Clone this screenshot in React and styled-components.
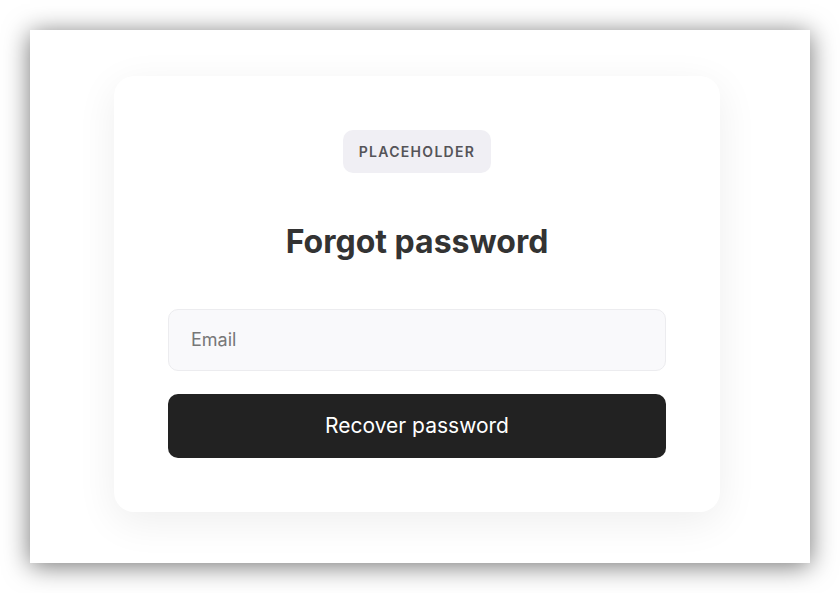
import styled, { createGlobalStyle } from "styled-components";

const GlobalStyle = createGlobalStyle`
    html, body {
        margin: 0;
        padding: 0;
        background: #FFF;
        font-family: Inter, "Noto Sans", sans-serif;
    }
`;

const App = () => {
    return (
        <>
            <GlobalStyle />
            <Page>
                <Frame>
                    <Card>
                        <Badge>PLACEHOLDER</Badge>
                        <Title>Forgot password</Title>
                        <Form onSubmit={(e) => e.preventDefault()}>
                            <Input type="email" placeholder="Email" />
                            <Button type="submit">Recover password</Button>
                        </Form>
                    </Card>
                </Frame>
            </Page>
        </>
    );
};

export default App;

const Page = styled.div`
    width: 840px;
    height: 593px;
    padding: 30px;
    box-sizing: border-box;
`;

const Frame = styled.div`
    width: 780px;
    height: 533px;
    background: #FFF;
    box-shadow: 0 3px 24px rgba(0, 0, 0, 0.55);
    display: flex;
    align-items: center;
    justify-content: center;
`;

const Card = styled.div`
    width: 606px;
    box-sizing: border-box;
    margin-right: 6px;
    margin-bottom: 6px;
    padding: 54px;
    background: #FFF;
    border-radius: 20px;
    box-shadow: 0 10px 40px rgba(0, 0, 0, 0.07);
    display: flex;
    flex-direction: column;
    align-items: center;
`;

const Badge = styled.div`
    height: 43px;
    padding: 0 16px;
    box-sizing: border-box;
    display: flex;
    align-items: center;
    background: #F0EFF4;
    border-radius: 10px;
    font-size: 14px;
    font-weight: 600;
    letter-spacing: 1.3px;
    color: #555458;
`;

const Title = styled.h1`
    margin: 50px 0 48px 0;
    font-size: 32px;
    line-height: 38px;
    font-weight: 700;
    color: #333;
`;

const Form = styled.form`
    width: 100%;
    display: flex;
    flex-direction: column;
    gap: 23px;
`;

const Input = styled.input`
    height: 62px;
    box-sizing: border-box;
    padding: 0 22px;
    background: #F9F9FB;
    border: 1px solid #ECECEF;
    border-radius: 10px;
    font-family: inherit;
    font-size: 18px;
    color: #333;
    outline: none;

    &::placeholder {
        color: #777;
    }
`;

const Button = styled.button`
    height: 64px;
    background: #222;
    border: none;
    border-radius: 10px;
    font-family: inherit;
    font-size: 21px;
    font-weight: 400;
    color: #FFF;
    cursor: pointer;
`;
